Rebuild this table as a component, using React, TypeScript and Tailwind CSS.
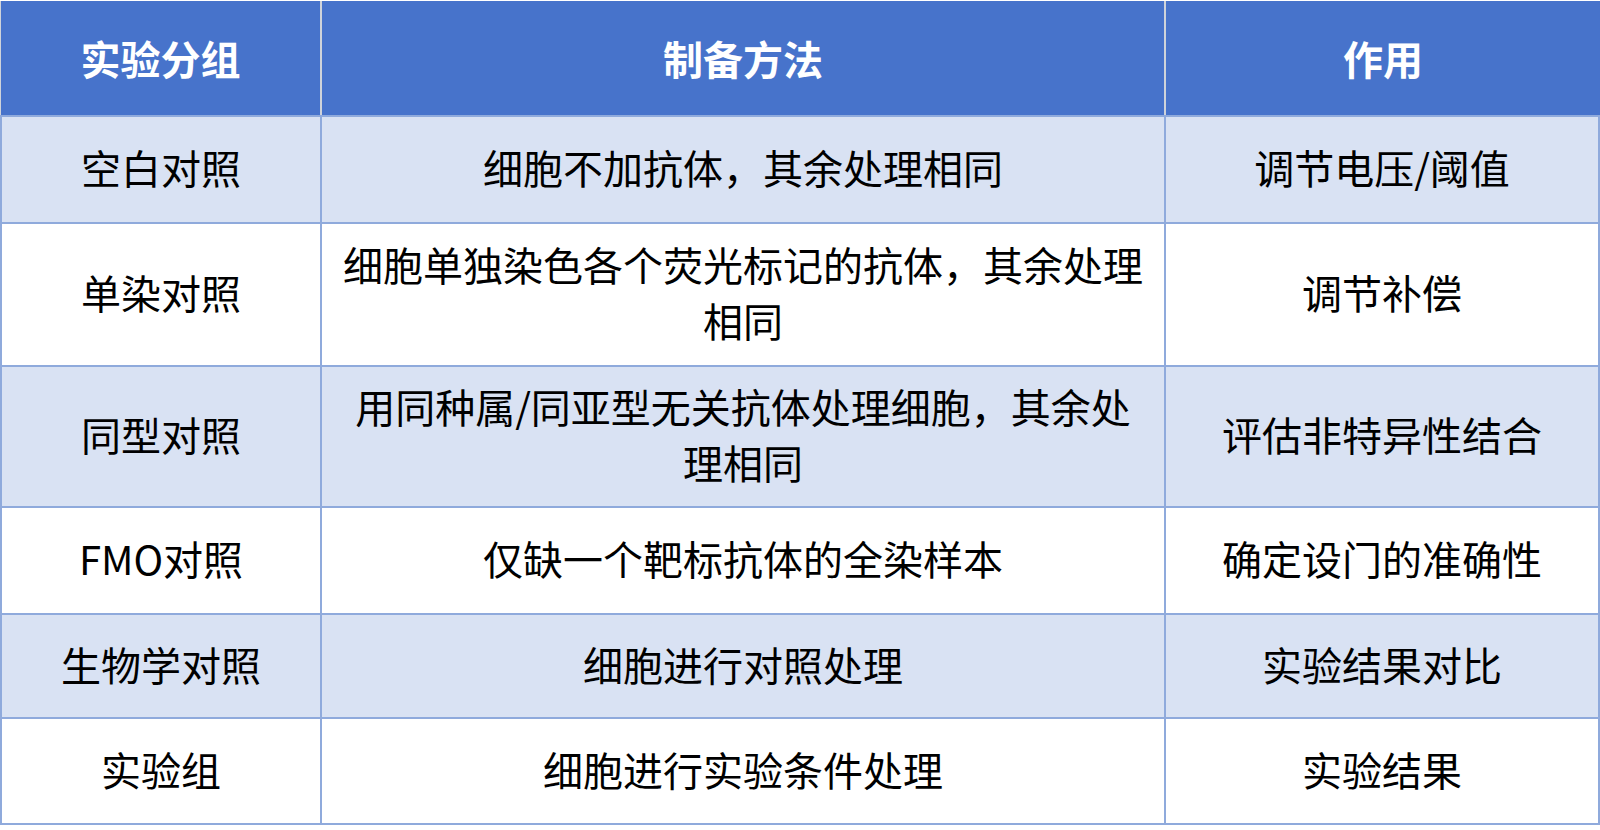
const rows: { h: string; bg: string; cells: string[] }[] = [
  { h: "h-[107px]", bg: "bg-[#d9e2f3]", cells: ["空白对照", "细胞不加抗体，其余处理相同", "调节电压/阈值"] },
  { h: "h-[143px]", bg: "bg-white", cells: ["单染对照", "细胞单独染色各个荧光标记的抗体，其余处理相同", "调节补偿"] },
  { h: "h-[141px]", bg: "bg-[#d9e2f3]", cells: ["同型对照", "用同种属/同亚型无关抗体处理细胞，其余处理相同", "评估非特异性结合"] },
  { h: "h-[107px]", bg: "bg-white", cells: ["FMO对照", "仅缺一个靶标抗体的全染样本", "确定设门的准确性"] },
  { h: "h-[104px]", bg: "bg-[#d9e2f3]", cells: ["生物学对照", "细胞进行对照处理", "实验结果对比"] },
  { h: "h-[106px]", bg: "bg-white", cells: ["实验组", "细胞进行实验条件处理", "实验结果"] },
];

const headers = ["实验分组", "制备方法", "作用"];

export default function App() {
  return (
    <div className="h-[830px] w-[1600px] bg-white font-['Noto_Sans_CJK_SC','Noto_Sans',sans-serif] text-[40px] leading-[56px] text-black">
      <div className="grid grid-cols-[322px_844px_1fr] border-t border-white">
        {headers.map((t, i) => (
          <div
            key={t}
            className={`flex h-[114px] items-center justify-center bg-[#4773cb] font-bold text-white ${
              i < 2 ? "border-r-2 border-r-[#cfd3da]" : ""
            } ${i === 0 ? "border-l border-l-[#cfd3da]" : ""}`}
          >
            {t}
          </div>
        ))}
      </div>
      <div className="border-l-2 border-t-2 border-[#8faadc]">
        {rows.map((r, ri) => (
          <div key={ri} className={`grid grid-cols-[320px_844px_1fr] ${r.bg}`}>
            {r.cells.map((c, ci) => (
              <div
                key={ci}
                className={`flex ${r.h} items-center justify-center border-b-2 border-r-2 border-[#8faadc] px-[18px] pb-[5px] text-center`}
              >
                {c}
              </div>
            ))}
          </div>
        ))}
      </div>
    </div>
  );
}
